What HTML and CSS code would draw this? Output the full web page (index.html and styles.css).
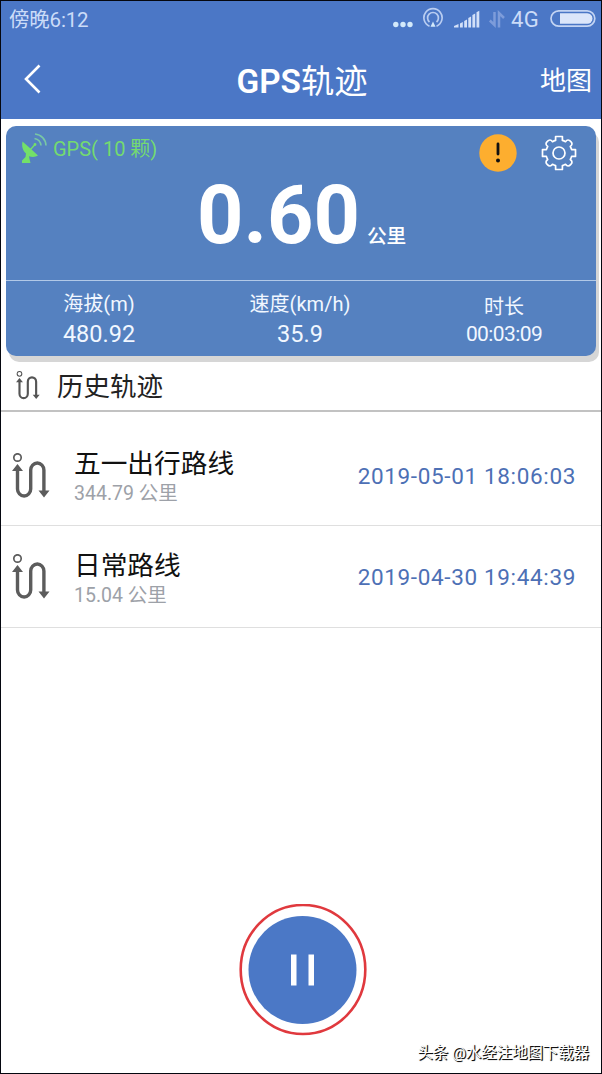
FILE: index.html
```html
<!DOCTYPE html>
<html lang="zh-CN">
<head>
<meta charset="utf-8">
<title>GPS轨迹</title>
<link rel="stylesheet" href="styles.css">
</head>
<body>
<svg class="defs" width="0" height="0" aria-hidden="true">
  <symbol id="track" viewBox="0 0 38 46">
    <circle cx="5.500" cy="4.500" r="3.700" fill="none" stroke="currentColor" stroke-width="1.700"/>
    <path d="M5.500 17V36A6.600 7 0 0 0 18.700 36V17A6.600 7 0 0 1 31.900 17V38" fill="none" stroke="currentColor" stroke-width="3.400"/>
    <path d="M0 18L5.500 11L11 18ZM26.500 37.500H37.500L32 44.500Z" fill="currentColor"/>
  </symbol>
</svg>
<div class="screen">
  <header class="top">
    <div class="status">
      <span class="clock">傍晚6:12</span>
      <svg class="dots" width="20" height="30" viewBox="0 0 20 30"><g fill="#d3e9fa"><circle cx="2.800" cy="20.500" r="2.700"/><circle cx="10" cy="20.500" r="2.700"/><circle cx="17" cy="20.500" r="2.700"/></g></svg>
      <svg class="hotspot" width="20" height="30" viewBox="0 0 20 30">
        <g fill="none" stroke="#b9cdf1" stroke-width="1.700">
          <path d="M6.500 22.200A9.100 9.100 0 1 1 13.500 22.200"/>
          <path d="M6.500 18A5.400 5.400 0 1 1 13.500 18"/>
        </g>
        <path d="M7.500 22.800L10 17.500L12.500 22.800Z" fill="#d3e9fa"/>
      </svg>
      <svg class="signal" width="26" height="30" viewBox="0 0 26 30">
        <path d="M0 23.500V22L4.500 20V23.500ZM6 23.500V19.500L8.800 18V23.500ZM10.200 23.500V17L13 15.500V23.500ZM14.300 23.500V14L17.100 12.500V23.500ZM18.400 23.500V11L21.200 9.500V23.500ZM22.500 23.500V8.200L25.300 6.800V23.500Z" fill="#d3e0f8"/>
      </svg>
      <svg class="data" width="18" height="30" viewBox="0 0 18 30"><path d="M6.500 8V21L1.800 16.500M11 23.500V9L16 14" fill="none" stroke="#7d9cda" stroke-width="2.500"/></svg>
      <span class="network">4G</span>
      <svg class="battery" width="46" height="30" viewBox="0 0 46 30">
        <rect x="1" y="6.800" width="43.800" height="15.400" rx="7.700" fill="none" stroke="#c3d4f3" stroke-width="1.700"/>
        <path d="M10 9.300H37.300A5.200 5.200 0 0 1 37.300 19.700H10Z" fill="#dce6fa"/>
      </svg>
    </div>
    <nav class="nav">
      <svg class="back" width="18" height="30" viewBox="0 0 18 30"><path d="M16.500 1.500L3 15L16.500 28.500" fill="none" stroke="#fff" stroke-width="2.600"/></svg>
      <h1 class="title"><b>GPS</b>轨迹</h1>
      <span class="map">地图</span>
    </nav>
  </header>

  <section class="card">
    <div class="card-top">
      <svg class="dish" width="27" height="31" viewBox="0 0 27 31">
        <path d="M1.500 8.500C0.500 13 1.500 17.500 5 20.500L4.500 24L1 27.500V30H9.500L8.500 26L8 23.300C11.500 24.500 15 24 17 22.500L10.500 16.500Z" fill="#73e069"/>
        <path d="M9 17L14 11.500" stroke="#73e069" stroke-width="1.300"/>
        <circle cx="14" cy="11.500" r="1.400" fill="#73e069"/>
        <path d="M13.500 5.500A8 8 0 0 1 20 12.500M14 1A12 12 0 0 1 25 12.500" fill="none" stroke="#79c8a4" stroke-width="1.600"/>
      </svg>
      <span class="gps">GPS( 10 颗)</span>
      <svg class="warn" width="38" height="38" viewBox="0 0 38 38"><circle cx="19" cy="19" r="18.700" fill="#fdae2f"/><path d="M19 10V20" stroke="#111" stroke-width="2.800" stroke-linecap="round"/><circle cx="19" cy="26.500" r="2" fill="#111"/></svg>
      <svg class="gear" width="36" height="36" viewBox="-18 -18 36 36">
        <g fill="none" stroke="#fff" stroke-width="1.700" stroke-linejoin="round">
          <circle r="6"/>
          <path d="M-3.400 -16.500H3.400V-12.600Q5 -12.200 6.500 -11.300Q9 -14.500 11.600 -11.600Q14.500 -9 11.300 -6.500Q12.200 -5 12.600 -3.400H16.500V3.400H12.600Q12.200 5 11.300 6.500Q14.500 9 11.600 11.600Q9 14.500 6.500 11.300Q5 12.200 3.400 12.600V16.500H-3.400V12.600Q-5 12.200 -6.500 11.300Q-9 14.500 -11.600 11.600Q-14.500 9 -11.300 6.500Q-12.200 5 -12.600 3.400H-16.500V-3.400H-12.600Q-12.200 -5 -11.300 -6.500Q-14.500 -9 -11.600 -11.600Q-9 -14.500 -6.500 -11.300Q-5 -12.200 -3.400 -12.600Z"/>
        </g>
      </svg>
    </div>
    <div class="distance"><span class="value">0.60</span><span class="unit">公里</span></div>
    <div class="stats">
      <div class="stat"><span class="label">海拔(m)</span><span class="num">480.92</span></div>
      <div class="stat"><span class="label">速度(km/h)</span><span class="num">35.9</span></div>
      <div class="stat time"><span class="label">时长</span><span class="num">00:03:09</span></div>
    </div>
  </section>

  <h2 class="history"><svg class="history-icon" width="24" height="29"><use href="#track"/></svg><span>历史轨迹</span></h2>

  <ul class="list">
    <li class="row first">
      <svg class="row-icon" width="38" height="46"><use href="#track"/></svg>
      <div class="info"><span class="name">五一出行路线</span><span class="length">344.79 公里</span></div>
      <time class="date">2019-05-01 18:06:03</time>
    </li>
    <li class="row">
      <svg class="row-icon" width="38" height="46"><use href="#track"/></svg>
      <div class="info"><span class="name">日常路线</span><span class="length">15.04 公里</span></div>
      <time class="date">2019-04-30 19:44:39</time>
    </li>
  </ul>

  <footer class="bottom">
    <svg class="pause" width="128" height="132" viewBox="0 0 128 132">
      <ellipse cx="64" cy="65.500" rx="62.300" ry="64.500" fill="none" stroke="#e0393e" stroke-width="2.600"/>
      <circle cx="63.500" cy="66" r="54" fill="#4b78c6"/>
      <path d="M52 50.500H57.500V81.500H52ZM69.500 50.500H75V81.500H69.500Z" fill="#fff"/>
    </svg>
    <span class="credit">头条 @水经注地图下载器</span>
  </footer>
</div>
</body>
</html>
```
FILE: styles.css
```css
* { box-sizing: border-box; }
body {
  margin: 0;
  background: #fff;
  font-family: Roboto, "Noto Sans CJK SC", sans-serif;
}
.defs { position: absolute; }
svg { display: block; flex: none; }
.screen {
  width: 602px;
  height: 1074px;
  border: 1px solid #05070f;
  display: flex;
  flex-direction: column;
  overflow: hidden;
  white-space: nowrap;
}
.top { height: 118px; background: #4b77c6; color: #fff; flex: none; }
.status { height: 38px; display: flex; padding: 3px 5px 0 8px; color: #cbdcf8; }
.clock { font-size: 20.500px; line-height: 32px; letter-spacing: -.2px; }
.dots { margin-left: auto; }
.hotspot { margin-left: 10px; }
.signal { margin-left: 11px; }
.data { margin-left: 8px; }
.network { width: 32px; margin-left: 5px; font-size: 22px; line-height: 32px; letter-spacing: .3px; }
.battery { margin-left: 7px; }
.nav { height: 80px; display: grid; grid-template-columns: 120px 1fr 120px; align-items: center; }
.back { margin-left: 22px; }
.title { margin: 5px 0 0 2px; text-align: center; font-size: 33.300px; line-height: 44px; font-weight: 400; }
.title b { font-weight: 600; }
.map { justify-self: end; margin-right: 9px; margin-top: 3px; font-size: 26px; line-height: 36px; }
.card {
  width: 590px;
  height: 230px;
  margin: 7px 0 0 5px;
  border-radius: 10px;
  background: #5581c0;
  box-shadow: 3px 6px 0 #d6d6d6;
  color: #fff;
  flex: none;
}
.card-top { height: 48px; display: flex; padding: 7px 19px 0 15px; color: #74da70; }
.gps { margin-left: 5px; font-size: 20px; line-height: 32px; }
.warn { margin-left: auto; margin-top: 1px; }
.gear { margin-left: 24px; margin-top: 2px; }
.distance { height: 106px; display: flex; align-items: baseline; padding: 2px 0 0 191px; }
.value { font-size: 81px; line-height: 80px; font-weight: 700; }
.unit { font-size: 19.700px; font-weight: 500; margin-left: 7px; }
.stats { height: 76px; display: grid; grid-template-columns: 186px 216px 188px; border-top: 1px solid #b2c9e7; color: #f1f7ff; }
.stat { display: flex; flex-direction: column; align-items: center; padding-top: 9px; }
.label { font-size: 20px; line-height: 28px; }
.num { font-size: 23.500px; line-height: 32px; }
.time { padding: 12px 0 0 4px; }
.time .num { font-size: 21px; line-height: 26px; letter-spacing: -.6px; }
.history {
  height: 56px;
  margin: 0;
  padding: 0 0 0 15px;
  border-bottom: 2px solid #c2c2c2;
  display: flex;
  align-items: center;
  gap: 17px;
  font-size: 26.500px;
  font-weight: 400;
  color: #222;
  flex: none;
}
.history-icon { color: #555; margin-top: 4px; }
.history span { line-height: 38px; margin-top: 8px; }
.list { margin: 0; padding: 0; list-style: none; flex: none; }
.row { height: 102px; display: flex; align-items: center; padding: 1px 25px 0 11px; border-bottom: 1px solid #dfdfdf; }
.first { height: 114px; padding-top: 14px; }
.row-icon { color: #5c5c5c; }
.info { display: flex; flex-direction: column; margin: 2px 0 0 24px; }
.name { font-size: 26.700px; line-height: 34px; color: #111; }
.length { font-size: 19.500px; line-height: 25px; color: #9da1a8; }
.date { margin-left: auto; font-size: 22.500px; letter-spacing: .65px; color: #4d70b5; }
.bottom { flex: 1; display: flex; flex-direction: column; align-items: center; justify-content: flex-end; }
.pause { margin-left: 4px; }
.credit {
  align-self: flex-end;
  margin: 5px 12px 7px 0;
  font-size: 15.400px;
  line-height: 25px;
  color: #fff;
  text-shadow: 1px 1px 0 #111, 1px 1px 1px #333;
}
```
